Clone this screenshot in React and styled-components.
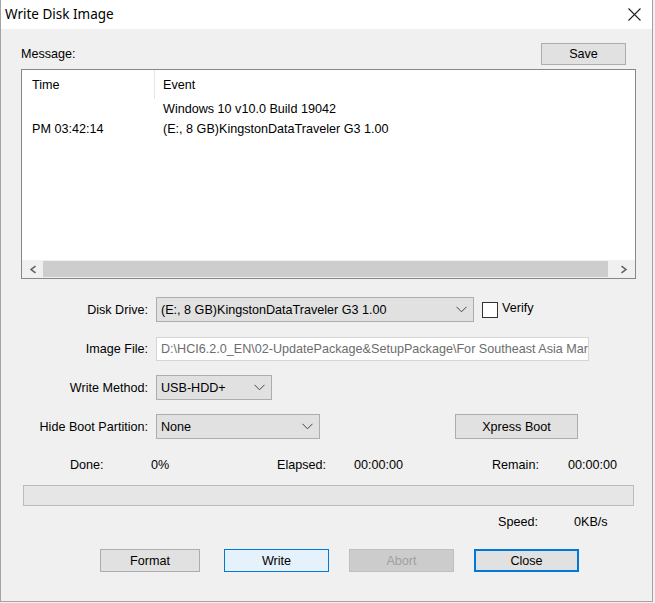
import styled, { createGlobalStyle } from 'styled-components'

const Global = createGlobalStyle`
  html, body {
    margin: 0;
    padding: 0;
    background: #f0f0f0;
  }
  * { box-sizing: border-box; }
`

const Window = styled.div`
  width: 653px;
  height: 602px;
  display: flex;
  flex-direction: column;
  border: 1px solid #a3a3a3;
  border-top: none;
  background: #f0f0f0;
  font-family: 'Liberation Sans', Arial, sans-serif;
  font-size: 12.6px;
  color: #000;
`

const TitleBar = styled.div`
  height: 29px;
  flex: none;
  display: flex;
  align-items: center;
  justify-content: space-between;
  padding: 0 11px 0 4px;
  background: #fff;
`

const Title = styled.div`
  font-family: 'Noto Sans', 'Liberation Sans', sans-serif;
  font-size: 13.5px;
  color: #000;
  margin-top: -1px;
`

const Body = styled.div`
  flex: 1;
  display: flex;
  flex-direction: column;
  padding: 14px 16px 0 20px;
`

const MessageHead = styled.div`
  height: 22px;
  display: flex;
  align-items: center;
  justify-content: space-between;
  padding-right: 10px;
  margin-bottom: 4px;
`

const Label = styled.span`
  white-space: nowrap;
  color: ${p => (p.$muted ? '#6d6d6d' : '#000')};
`

const Button = styled.button`
  width: ${p => p.$w || 105}px;
  height: ${p => p.$h || 23}px;
  padding: 0;
  font-family: inherit;
  font-size: 12.6px;
  color: ${p => (p.$disabled ? '#a0a0a0' : '#000')};
  background: ${p => (p.$hover ? '#e5f1fb' : p.$disabled ? '#cccccc' : '#e1e1e1')};
  border: 1px solid ${p => (p.$hover ? '#0078d7' : p.$disabled ? '#bfbfbf' : '#adadad')};
  box-shadow: ${p => (p.$default ? 'inset 0 0 0 1px #0078d7' : 'none')};
  ${p => p.$default && 'border-color: #0078d7;'}
`

const ListBox = styled.div`
  height: 210px;
  display: flex;
  flex-direction: column;
  background: #fff;
  border: 1px solid #828790;
`

const ListHeader = styled.div`
  height: 29px;
  display: flex;
  align-items: center;
`

const ListRow = styled.div`
  height: 20px;
  display: flex;
  align-items: center;
`

const TimeCell = styled.div`
  width: 133px;
  height: 100%;
  display: flex;
  align-items: center;
  padding-left: 10px;
  border-right: 1px solid ${p => (p.$head ? '#e5e5e5' : 'transparent')};
`

const EventCell = styled.div`
  padding-left: 8px;
  white-space: nowrap;
`

const ListFill = styled.div`
  flex: 1;
`

const HScroll = styled.div`
  height: 18px;
  display: flex;
  background: #f0f0f0;
`

const ScrollArrow = styled.div`
  width: 21px;
  display: flex;
  align-items: center;
  justify-content: center;
`

const Thumb = styled.div`
  flex: 1;
  margin: 1px 6px 1px 0;
  background: #cdcdcd;
`

const Form = styled.div`
  margin-top: 18px;
  display: grid;
  grid-template-columns: 127px 1fr;
  grid-auto-rows: 25px;
  column-gap: 8px;
  row-gap: 14px;
  align-items: center;
`

const FormLabel = styled.div`
  text-align: right;
  white-space: nowrap;
`

const Line = styled.div`
  display: flex;
  align-items: center;
  height: 100%;
`

const Select = styled.div`
  width: ${p => p.$w}px;
  height: 25px;
  display: flex;
  align-items: center;
  justify-content: space-between;
  padding: 0 6px 0 4px;
  background: #e1e1e1;
  border: 1px solid #adadad;
  white-space: nowrap;
`

const TextInput = styled.div`
  width: 433px;
  height: 24px;
  display: flex;
  align-items: center;
  padding: 0 4px;
  background: #fff;
  border: 1px solid #d6d6d6;
  color: #6d6d6d;
  white-space: nowrap;
  overflow: hidden;
`

const Check = styled.span`
  width: 16px;
  height: 16px;
  margin: 0 4px 0 8px;
  background: #fff;
  border: 1px solid #333;
  align-self: center;
`

const VerifyText = styled.span`
  margin-top: -3px;
`

const Stats = styled.div`
  margin-top: 18px;
  height: 16px;
  padding-left: 49px;
  display: grid;
  grid-template-columns: 81px 126px 77px 138px 76px auto;
  align-items: center;
`

const Progress = styled.div`
  margin: 12px 0 0 2px;
  width: 611px;
  height: 21px;
  background: #e6e6e6;
  border: 1px solid #bcbcbc;
`

const SpeedRow = styled.div`
  margin-top: 8px;
  height: 16px;
  padding-left: 477px;
  display: grid;
  grid-template-columns: 76px auto;
  align-items: center;
`

const ButtonRow = styled.div`
  margin-top: 19px;
  padding-left: 79px;
  display: flex;
  gap: 20px;
`

const Chevron = () => (
  <svg width="11" height="7" viewBox="0 0 11 7">
    <polyline points="0.5,0.8 5.5,5.8 10.5,0.8" fill="none" stroke="#444" strokeWidth="1" />
  </svg>
)

const ArrowLeft = () => (
  <svg width="7" height="9" viewBox="0 0 7 9">
    <polygon points="6,0.5 7,1.8 3.2,4.5 7,7.2 6,8.5 0.8,4.5" fill="#606060" />
  </svg>
)

const ArrowRight = () => (
  <svg width="7" height="9" viewBox="0 0 7 9">
    <polygon points="1,0.5 0,1.8 3.8,4.5 0,7.2 1,8.5 6.2,4.5" fill="#606060" />
  </svg>
)

const CloseIcon = () => (
  <svg width="13" height="13" viewBox="0 0 13 13">
    <path d="M0.5 0.5 L12.5 12.5 M12.5 0.5 L0.5 12.5" stroke="#222" strokeWidth="1.1" />
  </svg>
)

export default function App() {
  return (
    <>
      <Global />
      <Window>
        <TitleBar>
          <Title>Write Disk Image</Title>
          <CloseIcon />
        </TitleBar>
        <Body>
          <MessageHead>
            <Label>Message:</Label>
            <Button $w={85} $h={22}>Save</Button>
          </MessageHead>

          <ListBox>
            <ListHeader>
              <TimeCell $head>Time</TimeCell>
              <EventCell>Event</EventCell>
            </ListHeader>
            <ListRow>
              <TimeCell />
              <EventCell>Windows 10 v10.0 Build 19042</EventCell>
            </ListRow>
            <ListRow>
              <TimeCell>PM 03:42:14</TimeCell>
              <EventCell>(E:, 8 GB)KingstonDataTraveler G3 1.00</EventCell>
            </ListRow>
            <ListFill />
            <HScroll>
              <ScrollArrow><ArrowLeft /></ScrollArrow>
              <Thumb />
              <ScrollArrow><ArrowRight /></ScrollArrow>
            </HScroll>
          </ListBox>

          <Form>
            <FormLabel>Disk Drive:</FormLabel>
            <Line>
              <Select $w={318}>
                <span>(E:, 8 GB)KingstonDataTraveler G3 1.00</span>
                <Chevron />
              </Select>
              <Check />
              <VerifyText>Verify</VerifyText>
            </Line>

            <FormLabel>Image File:</FormLabel>
            <Line>
              <TextInput>D:\HCI6.2.0_EN\02-UpdatePackage&amp;SetupPackage\For Southeast Asia Market</TextInput>
            </Line>

            <FormLabel>Write Method:</FormLabel>
            <Line>
              <Select $w={116}>
                <span>USB-HDD+</span>
                <Chevron />
              </Select>
            </Line>

            <FormLabel>Hide Boot Partition:</FormLabel>
            <Line>
              <Select $w={164}>
                <span>None</span>
                <Chevron />
              </Select>
              <Button $w={123} $h={25} style={{ marginLeft: 135 }}>Xpress Boot</Button>
            </Line>
          </Form>

          <Stats>
            <Label>Done:</Label>
            <Label>0%</Label>
            <Label>Elapsed:</Label>
            <Label>00:00:00</Label>
            <Label>Remain:</Label>
            <Label>00:00:00</Label>
          </Stats>

          <Progress />

          <SpeedRow>
            <Label>Speed:</Label>
            <Label>0KB/s</Label>
          </SpeedRow>

          <ButtonRow>
            <Button $w={100} style={{ marginRight: 4 }}>Format</Button>
            <Button $hover>Write</Button>
            <Button $disabled>Abort</Button>
            <Button $default>Close</Button>
          </ButtonRow>
        </Body>
      </Window>
    </>
  )
}
